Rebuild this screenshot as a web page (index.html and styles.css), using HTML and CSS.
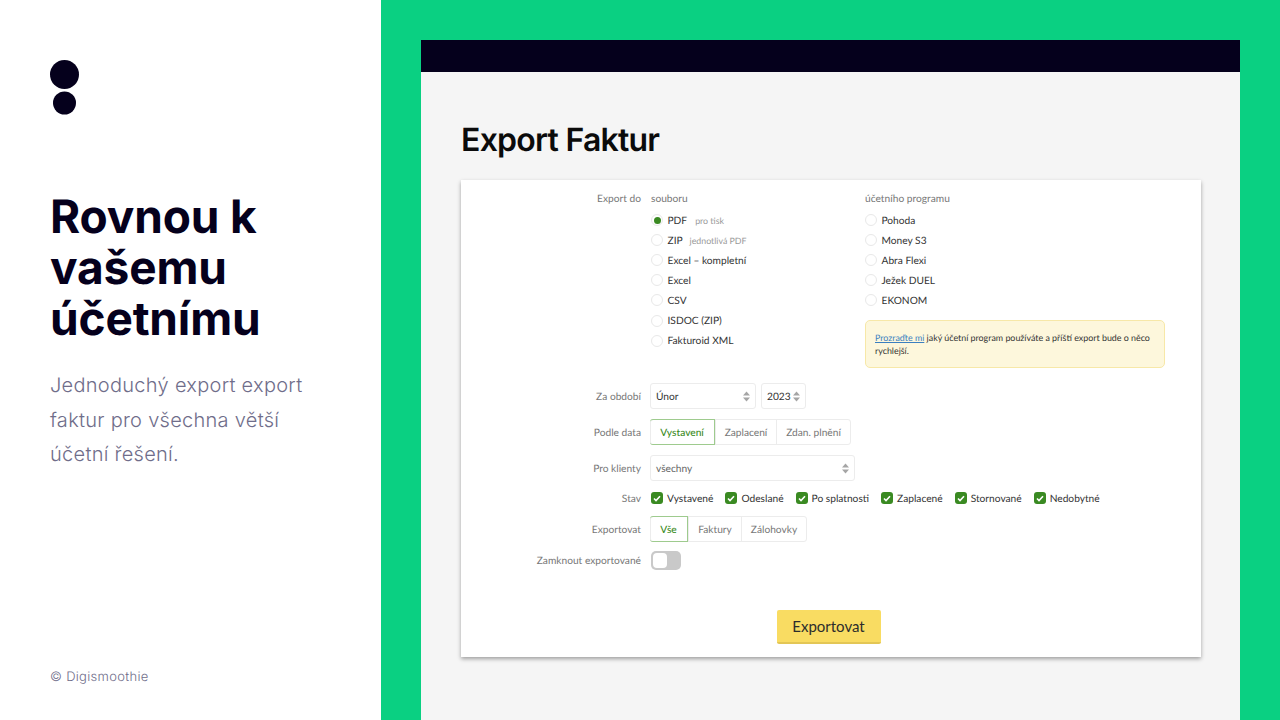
FILE: index.html
```html
<!DOCTYPE html>
<html lang="cs">
<head>
    <meta charset="UTF-8">
    <title>Export Faktur</title>
    <link rel="stylesheet" href="styles.css">
</head>
<body>
<aside class="intro">
    <svg class="logo" width="30" height="55" viewBox="0 0 30 55"><circle cx="14.5" cy="14.5" r="14.5" fill="#05001c"/><circle cx="14.5" cy="43" r="11.5" fill="#05001c"/></svg>
    <h1>Rovnou k vašemu účetnímu</h1>
    <p class="lead">Jednoduchý export export faktur pro všechna větší účetní řešení.</p>
    <p class="copy">© Digismoothie</p>
</aside>

<main class="stage">
    <div class="window">
        <div class="topbar"></div>
        <div class="content">
            <h2>Export Faktur</h2>
            <div class="card">
                <!-- Export do -->
                <div class="row row-export">
                    <div class="label">Export do</div>
                    <div class="export-cols">
                        <div class="col-file">
                            <div class="col-head">souboru</div>
                            <div class="radio on"><i></i>PDF <small class="note-a">pro tisk</small></div>
                            <div class="radio"><i></i>ZIP <small>jednotlivá PDF</small></div>
                            <div class="radio"><i></i>Excel – kompletní</div>
                            <div class="radio"><i></i>Excel</div>
                            <div class="radio"><i></i>CSV</div>
                            <div class="radio"><i></i>ISDOC (ZIP)</div>
                            <div class="radio"><i></i>Fakturoid XML</div>
                        </div>
                        <div class="col-app">
                            <div class="col-head">účetního programu</div>
                            <div class="radio"><i></i>Pohoda</div>
                            <div class="radio"><i></i>Money S3</div>
                            <div class="radio"><i></i>Abra Flexi</div>
                            <div class="radio"><i></i>Ježek DUEL</div>
                            <div class="radio"><i></i>EKONOM</div>
                            <div class="notice"><a href="#">Prozraďte mi</a> jaký účetní program používáte a příští export bude o něco rychlejší.</div>
                        </div>
                    </div>
                </div>

                <div class="row row-period">
                    <div class="label">Za období</div>
                    <div class="select month">Únor<svg class="arrows" width="7" height="11" viewBox="0 0 7 11"><path d="M3.5 0.5L7 4.5H0zM3.5 10.5L0 6.5H7z"/></svg></div>
                    <div class="select year">2023<svg class="arrows" width="7" height="11" viewBox="0 0 7 11"><path d="M3.5 0.5L7 4.5H0zM3.5 10.5L0 6.5H7z"/></svg></div>
                </div>

                <div class="row row-date">
                    <div class="label">Podle data</div>
                    <div class="segment">
                        <span class="active seg-issued">Vystavení</span>
                        <span class="seg-paid">Zaplacení</span>
                        <span class="seg-tax">Zdan. plnění</span>
                    </div>
                </div>

                <div class="row row-client">
                    <div class="label">Pro klienty</div>
                    <div class="select client">všechny<svg class="arrows" width="7" height="11" viewBox="0 0 7 11"><path d="M3.5 0.5L7 4.5H0zM3.5 10.5L0 6.5H7z"/></svg></div>
                </div>

                <div class="row row-state">
                    <div class="label">Stav</div>
                    <div class="checks">
                        <span class="check"><i><svg width="8" height="7" viewBox="0 0 8 7"><path d="M1 3.5L3 5.5L7 1.2" fill="none" stroke="#fff" stroke-width="1.6"/></svg></i>Vystavené</span>
                        <span class="check"><i><svg width="8" height="7" viewBox="0 0 8 7"><path d="M1 3.5L3 5.5L7 1.2" fill="none" stroke="#fff" stroke-width="1.6"/></svg></i>Odeslané</span>
                        <span class="check"><i><svg width="8" height="7" viewBox="0 0 8 7"><path d="M1 3.5L3 5.5L7 1.2" fill="none" stroke="#fff" stroke-width="1.6"/></svg></i>Po splatnosti</span>
                        <span class="check"><i><svg width="8" height="7" viewBox="0 0 8 7"><path d="M1 3.5L3 5.5L7 1.2" fill="none" stroke="#fff" stroke-width="1.6"/></svg></i>Zaplacené</span>
                        <span class="check"><i><svg width="8" height="7" viewBox="0 0 8 7"><path d="M1 3.5L3 5.5L7 1.2" fill="none" stroke="#fff" stroke-width="1.6"/></svg></i>Stornované</span>
                        <span class="check"><i><svg width="8" height="7" viewBox="0 0 8 7"><path d="M1 3.5L3 5.5L7 1.2" fill="none" stroke="#fff" stroke-width="1.6"/></svg></i>Nedobytné</span>
                    </div>
                </div>

                <div class="row row-type">
                    <div class="label">Exportovat</div>
                    <div class="segment">
                        <span class="active seg-all">Vše</span>
                        <span class="seg-inv">Faktury</span>
                        <span class="seg-adv">Zálohovky</span>
                    </div>
                </div>

                <div class="row row-lock">
                    <div class="label">Zamknout exportované</div>
                    <div class="toggle"><b></b></div>
                </div>

                <div class="actions">
                    <button class="btn-export">Exportovat</button>
                </div>
            </div>
        </div>
    </div>
</main>
</body>
</html>
```

FILE: styles.css
```css
* { box-sizing: border-box; }
html, body { height: 100%; }
body {
  margin: 0;
  display: flex;
  height: 720px;
  overflow: hidden;
  background: #fff;
  font-family: 'Lato', sans-serif;
  text-rendering: geometricPrecision;
}

/* Left panel */
.intro {
  width: 381px;
  flex: none;
  padding: 60px 50px 0;
  display: flex;
  flex-direction: column;
  color: #05001c;
}
.logo { display: block; }
.intro h1 {
  margin: 77px 0 0;
  font-family: 'Inter', sans-serif;
  font-size: 46px;
  line-height: 51px;
  font-weight: 700;
  letter-spacing: -0.15px;
}
.lead {
  margin: 23px 0 0;
  font-family: 'Inter', sans-serif;
  font-weight: 300;
  font-size: 20px;
  line-height: 34.5px;
  letter-spacing: 0.28px;
  color: #6f6d8a;
}
.copy {
  margin: auto 0 34px;
  font-family: 'Inter', sans-serif;
  font-weight: 300;
  font-size: 13px;
  line-height: 18px;
  letter-spacing: 0.3px;
  color: #6f6d8a;
}

/* Green stage */
.stage {
  flex: 1;
  background: #0ad082;
  padding: 40px 40px 0;
}
.window {
  height: 100%;
  background: #f5f5f5;
}
.topbar { height: 32px; background: #05001c; }
.content { padding: 0 39px 0 40px; }
.content h2 {
  margin: 0;
  padding-top: 48px;
  font-family: 'Inter', sans-serif;
  font-size: 32px;
  line-height: 40px;
  font-weight: 600;
  letter-spacing: -0.75px;
  color: #0b0b0b;
}

/* Form card */
.card {
  margin-top: 20px;
  height: 477px;
  padding-top: 11px;
  background: #fff;
  box-shadow: 0 2px 4px rgba(0,0,0,0.35);
  font-size: 10.2px;
  color: #333;
}
.row { display: flex; align-items: center; }
.label {
  width: 180px;
  margin-right: 9px;
  padding-top: 1px;
  flex: none;
  text-align: right;
  color: #777;
}
.row-export { align-items: flex-start; height: 192px; }
.row-export .label { line-height: 14px; }
.export-cols { display: flex; }
.col-file { width: 215px; padding-left: 1px; }
.col-app { width: 300px; }
.col-head { height: 14px; line-height: 14px; margin-bottom: 5px; padding-top: 1px; color: #777; }

.radio {
  display: flex;
  align-items: center;
  height: 20.1px;
  padding-top: 1px;
  color: #333;
}
.radio i {
  width: 12px;
  height: 12px;
  margin: -1px 4.5px 0 0;
  border: 1px solid #e8e8e8;
  border-radius: 50%;
  background: #fff;
  flex: none;
  display: flex;
  align-items: center;
  justify-content: center;
}
.radio.on i::after {
  content: "";
  width: 7px;
  height: 7px;
  border-radius: 50%;
  background: #3a8a22;
}
.radio small { margin-left: 7px; font-size: 8.8px; color: #999; }
.radio small.note-a { margin-left: 8px; }

.notice {
  margin-top: 10px;
  height: 48px;
  padding: 10px 9px;
  background: #fdf7dc;
  border: 1px solid #f7e8a8;
  border-radius: 5px;
  font-size: 8.9px;
  line-height: 13px;
  color: #333;
}
.notice a { color: #3b7fc0; }

.select {
  height: 26px;
  padding: 1px 5px 0;
  display: flex;
  align-items: center;
  justify-content: space-between;
  border: 1px solid #ececec;
  border-radius: 3px;
  background: #fff;
  color: #333;
}
.arrows { fill: #a5a5a5; margin-top: -1px; }
.row-period { height: 26px; }
.month { width: 106px; margin-right: 5px; }
.year { width: 45px; }
.client { width: 205px; color: #666; }

.segment {
  display: flex;
  height: 26px;
  border: 1px solid #ececec;
  border-radius: 3px;
  color: #777;
}
.segment span {
  display: flex;
  align-items: center;
  justify-content: center;
  padding-top: 1px;
  border-left: 1px solid #ececec;
}
.segment span:first-child { border-left: 0; }
.segment .active {
  margin: -1px 0 -1px -1px;
  border: 1px solid #9ecb8e;
  border-radius: 3px 0 0 3px;
  color: #3a8a22;
  font-weight: 500;
}
.seg-issued { width: 65px; }
.seg-paid { width: 61px; }
.seg-tax { width: 74px; }
.seg-all { width: 38px; }
.seg-inv { width: 53px; }
.seg-adv { width: 65px; }
.row-date { margin-top: 10px; }
.row-client { margin-top: 10px; }

.row-state { margin-top: 4px; height: 26px; }
.checks { display: flex; padding-left: 1px; }
.check { display: flex; align-items: center; margin-right: 12px; padding-top: 1px; color: #333; }
.check i {
  width: 12px;
  height: 12px;
  margin: -1px 4px 0 0;
  border-radius: 3px;
  background: #3a8a22;
  display: flex;
  align-items: center;
  justify-content: center;
}
.row-type { margin-top: 5px; }

.row-lock { margin-top: 9px; height: 19px; }
.toggle {
  width: 30px;
  height: 19px;
  margin-left: 1px;
  padding: 2px;
  border-radius: 5px;
  background: #c9c9c9;
}
.toggle b {
  display: block;
  width: 14px;
  height: 15px;
  border-radius: 4px;
  background: #fff;
}

.actions {
  margin-top: 40px;
  padding-right: 5px;
  display: flex;
  justify-content: center;
}
.btn-export {
  width: 104px;
  height: 34px;
  padding: 0;
  border: 0;
  border-bottom: 2px solid #e3c655;
  border-radius: 2px;
  background: #f9dc62;
  font-family: 'Lato', sans-serif;
  font-size: 15px;
  color: #2c2c2c;
}
```
